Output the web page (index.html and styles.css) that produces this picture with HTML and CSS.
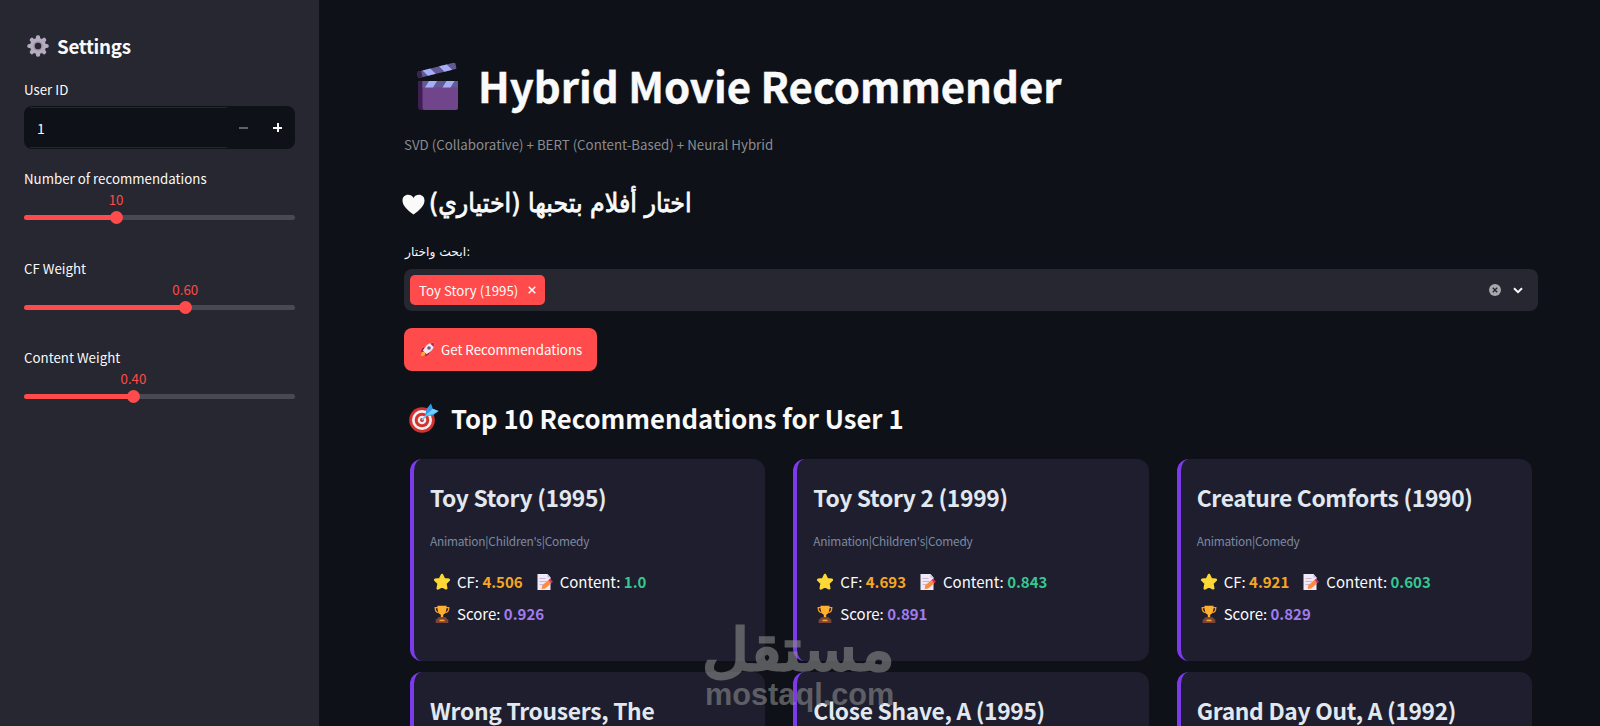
FILE: index.html
```
<!DOCTYPE html>
<html lang="en">
<head>
<meta charset="utf-8">
<title>Hybrid Movie Recommender</title>
<link rel="stylesheet" href="styles.css">
</head>
<body>

<!-- shared icons -->
<svg class="defs" width="0" height="0">
  <symbol id="i-star" viewBox="0 0 18 18">
    <path fill="#fdd835" stroke="#fdd835" stroke-width="2.600" stroke-linejoin="round" d="M9 2l2 4.300 4.800.6-3.500 3.500.9 4.900L9 13l-4.200 2.300.9-4.900-3.500-3.500L7 6.300z"/>
  </symbol>
  <symbol id="i-memo" viewBox="0 0 18 18">
    <path fill="#f1e9f5" d="M1.500 1h10l3 3.400V17h-13z"/>
    <path fill="#c9b5d6" d="M11.500 1v3.400h3zM3.500 5h6v1h-6zM3.500 8h7v1h-7zM3.500 11h4v1h-4z"/>
    <path fill="#ff8a3d" d="M6.400 12.300l6-5.200 2.800 3.100-6 5.200-3.600.6z"/>
    <path fill="#e0266b" d="M12.400 7.100l1.700-1.400 2.900 3-1.800 1.500z"/>
  </symbol>
  <symbol id="i-cup" viewBox="0 0 18 18">
    <path fill="none" stroke="#f59a23" stroke-width="1.300" d="M5 2.700H2.200c0 3 1.200 4.600 3.600 5M13 2.700h2.800c0 3-1.200 4.600-3.600 5"/>
    <path fill="#ffb02e" d="M4.400.8h9.200c0 5-1 8-3.400 9v2.600H7.800V9.800C5.400 8.800 4.400 5.800 4.400.8z"/>
    <path fill="#7d4533" d="M5 12.200h8l1 2h1.300V18H2.700v-3.800H4z"/>
    <path fill="#f9a73e" d="M6.500 14.700h5v1.500h-5z"/>
  </symbol>
</svg>

<div class="app">

  <div class="sidebar">
    <h2>
      <svg class="gear" viewBox="0 0 22 22">
        <g fill="#b4abbf">
          <g id="teeth"><rect x="8.900" y="0.300" width="4.200" height="21.400" rx="1.800"/><rect x="0.300" y="8.900" width="21.400" height="4.200" rx="1.800"/></g>
          <use href="#teeth" transform="rotate(45 11 11)"/>
          <circle cx="11" cy="11" r="8"/>
        </g>
        <circle cx="11" cy="11" r="4.600" fill="#998da6"/>
        <circle cx="11" cy="11" r="3.200" fill="#262730"/>
      </svg>
      Settings
    </h2>

    <label class="first">User ID</label>
    <div class="number">
      <span class="value">1</span>
      <span class="minus"></span>
      <span class="plus"></span>
    </div>

    <div class="slider">
      <label>Number of recommendations</label>
      <div class="track" style="--v:34%"><b>10</b><i></i></div>
    </div>
    <div class="slider">
      <label>CF Weight</label>
      <div class="track" style="--v:59.5%"><b>0.60</b><i></i></div>
    </div>
    <div class="slider">
      <label>Content Weight</label>
      <div class="track" style="--v:40.4%"><b>0.40</b><i></i></div>
    </div>
  </div>

  <div class="main">
    <h1>
      <svg class="clapper" viewBox="0 0 42 48">
        <g transform="rotate(-14 2 14)">
          <rect x="1" y="8.500" width="39.500" height="6.500" rx="1" fill="#635994"/>
          <path fill="#a6aef5" d="M7 8.500h8l4 6.500h-8zM24 8.500h8l4 6.500h-8z"/>
          <rect x="1" y="8.500" width="4.500" height="6.500" rx="1" fill="#3b2150"/>
        </g>
        <path fill="#3f1f52" d="M1 18h6v29H4a3 3 0 0 1-3-3z"/>
        <path fill="#70458c" d="M5.500 18H41v27a2 2 0 0 1-2 2H7.500a2 2 0 0 1-2-2z"/>
        <path fill="#635994" d="M5.500 18H41v6.500H5.500z"/>
        <path fill="#a6aef5" d="M12 18h8l-4 6.500H8zM29.500 18h8l-4 6.500h-8z"/>
      </svg>
      <span>Hybrid Movie Recommender</span>
    </h1>
    <p class="caption">SVD (Collaborative) + BERT (Content-Based) + Neural Hybrid</p>

    <h3 class="ar">
      <svg class="heart" viewBox="0 0 23 21"><path fill="#fafafa" d="M11.500 20.500C6 16.500.5 12 .5 6.500.5 3 3 .8 6 .8c2.400 0 4.500 1.200 5.500 3.200 1-2 3.100-3.200 5.500-3.200 3 0 5.500 2.200 5.500 5.700 0 5.500-5.500 10-11 14z"/></svg>
      <span>اختار أفلام بتحبها (اختياري)</span>
    </h3>
    <label class="ar-label">ابحث واختار:</label>

    <div class="select">
      <span class="tag">Toy Story (1995)
        <svg width="8" height="8" viewBox="0 0 8 8"><path stroke="#fff" stroke-width="1.400" d="M.7.7l6.600 6.600M7.300.7L.7 7.300"/></svg>
      </span>
      <svg class="clear" width="12" height="12" viewBox="0 0 12 12"><circle cx="6" cy="6" r="6" fill="#a7a8ac"/><path stroke="#262730" stroke-width="1.400" d="M3.800 3.800l4.400 4.400M8.200 3.800L3.800 8.200"/></svg>
      <svg width="10" height="7" viewBox="0 0 10 7"><path fill="none" stroke="#fafafa" stroke-width="2" d="M1 1.200l4 4 4-4"/></svg>
    </div>

    <button>
      <svg class="rocket" viewBox="0 0 16 16">
        <path fill="#ffb02e" d="M1 15c0-3 1.200-4.500 3-4.500L5.800 12C5.500 14 4 15 1 15z"/>
        <path fill="#a5183c" d="M7 5.500L3 6.500.8 10l4 .5zM10.500 9l-1 4L6 15.200l-.5-4z"/>
        <path fill="#ece7f0" d="M15.200.8c.3 4-1.200 7.200-4.400 9.600L7 13 3 9l2.600-3.800C8 2 11.200.5 15.200.8z"/>
        <path fill="#d3224f" d="M15.200.8c.1 1.700-.1 3.100-.7 4.400L10.800 1.500C12.100.9 13.500.7 15.200.8z"/>
        <circle cx="9.600" cy="6.400" r="1.900" fill="#6a5a8c"/>
      </svg>
      Get Recommendations
    </button>

    <h3 class="top">
      <svg class="target" viewBox="0 0 30 30">
        <circle cx="13" cy="17" r="12.800" fill="#d3332f"/>
        <circle cx="13" cy="17" r="10" fill="#f7eef2"/>
        <circle cx="13" cy="17" r="7.300" fill="#d3332f"/>
        <circle cx="13" cy="17" r="4.300" fill="#f7eef2"/>
        <circle cx="13" cy="17" r="2" fill="#d3332f"/>
        <path stroke="#7cc8f7" stroke-width="1.800" d="M13 17l8-9"/>
        <path fill="#2f9df0" d="M16 13l1.500-7L22 .5l1.800 5.200L29.500 8l-5.500 4.600z"/>
        <path fill="#74d0fa" d="M16 13l7.800-7.300L29.500 8l-5.500 3z"/>
      </svg>
      <span>Top 10 Recommendations for User 1</span>
    </h3>

    <div class="cards">
      <div class="card">
        <h4>Toy Story (1995)</h4>
        <p class="genre">Animation|Children's|Comedy</p>
        <div class="row"><svg><use href="#i-star"/></svg>CF: <b class="cf">4.506</b><svg class="gap"><use href="#i-memo"/></svg>Content: <b class="ct">1.0</b></div>
        <div class="row"><svg><use href="#i-cup"/></svg>Score: <b class="sc">0.926</b></div>
      </div>
      <div class="card">
        <h4>Toy Story 2 (1999)</h4>
        <p class="genre">Animation|Children's|Comedy</p>
        <div class="row"><svg><use href="#i-star"/></svg>CF: <b class="cf">4.693</b><svg class="gap"><use href="#i-memo"/></svg>Content: <b class="ct">0.843</b></div>
        <div class="row"><svg><use href="#i-cup"/></svg>Score: <b class="sc">0.891</b></div>
      </div>
      <div class="card">
        <h4>Creature Comforts (1990)</h4>
        <p class="genre">Animation|Comedy</p>
        <div class="row"><svg><use href="#i-star"/></svg>CF: <b class="cf">4.921</b><svg class="gap"><use href="#i-memo"/></svg>Content: <b class="ct">0.603</b></div>
        <div class="row"><svg><use href="#i-cup"/></svg>Score: <b class="sc">0.829</b></div>
      </div>
      <div class="card"><h4>Wrong Trousers, The</h4></div>
      <div class="card"><h4>Close Shave, A (1995)</h4></div>
      <div class="card"><h4>Grand Day Out, A (1992)</h4></div>
    </div>
  </div>

</div>

<div class="watermark">
  <div class="wm-ar"><span>مستقل</span></div>
  <div class="wm-en">mostaql.com</div>
</div>

</body>
</html>
```
FILE: styles.css
```
* { box-sizing: border-box; }

body {
  margin: 0;
  height: 726px;
  overflow: hidden;
  background: #0e1117;
  color: #fafafa;
  font-family: "Noto Sans CJK SC", "Noto Sans", sans-serif;
  font-size: 13.3px;
}
h1, h2, h3, h4, p { margin: 0; }
svg { flex: none; }
.defs { position: absolute; }

.app {
  display: flex;
  height: 726px;
  overflow: hidden;
}

/* sidebar */
.sidebar {
  width: 319px;
  flex: none;
  padding: 30px 24px 0;
  background: #262730;
}
.sidebar h2 {
  display: flex;
  align-items: center;
  height: 32px;
  font-size: 18.8px;
  letter-spacing: -.3px;
  line-height: 32px;
}
.gear {
  width: 22px;
  height: 22px;
  margin: 0 8px 0 3px;
}
label {
  display: block;
  line-height: 20px;
}
label.first { margin: 18px 0 6px; }

.number {
  display: flex;
  align-items: center;
  height: 43px;
  padding: 0 13px;
  border-radius: 8px;
  background: linear-gradient(#262730, #262730) 6px 1px / 197px 1px no-repeat,
              linear-gradient(#262730, #262730) 6px 41px / 197px 1px no-repeat,
              #0e1117;
}
.number .value {
  flex: 1;
  font-size: 14px;
}
.minus, .plus {
  width: 9px;
  height: 2px;
  background: #5f6069;
}
.plus {
  margin-left: 25px;
  background: linear-gradient(#fafafa, #fafafa) center / 2px 9px no-repeat,
              linear-gradient(#fafafa, #fafafa) center / 9px 2px no-repeat;
  height: 9px;
}

.slider {
  height: 89.5px;
  padding-top: 20px;
}
.track {
  position: relative;
  height: 5px;
  margin-top: 26px;
  border-radius: 3px;
  background: linear-gradient(to right, #ff4b4b var(--v), #484953 var(--v));
}
.track i {
  position: absolute;
  left: var(--v);
  top: -4px;
  width: 13px;
  height: 13px;
  margin-left: -6.5px;
  border-radius: 50%;
  background: #ff4b4b;
}
.track b {
  position: absolute;
  left: var(--v);
  bottom: 10px;
  transform: translateX(-50%);
  color: #ff4b4b;
  font-weight: 400;
  line-height: 20px;
}

/* main column */
.main {
  flex: 1;
  padding: 59px 62px 0 85px;
}
h1 {
  display: flex;
  height: 52px;
  font-size: 41.9px;
  line-height: 52px;
  -webkit-text-stroke: .4px #fafafa;
}
.clapper {
  width: 42px;
  height: 48px;
  margin: 4px 19px 0 13px;
}
.caption {
  margin-top: 24px;
  color: #8b8c90;
  line-height: 20px;
}
h3 {
  display: flex;
  height: 36px;
  font-size: 25.7px;
  line-height: 36px;
}
.ar {
  margin-top: 30px;
  font-family: "DejaVu Sans", sans-serif;
  font-weight: 400;
  -webkit-text-stroke: .8px #fafafa;
}
.ar span {
  transform: scaleX(.925);
  transform-origin: left;
}
.heart {
  width: 23px;
  height: 21px;
  margin: 9px 4px 0 -2px;
}
.ar-label {
  margin: 21px 0 7px 1px;
  font-family: "DejaVu Sans", sans-serif;
  font-size: 12.3px;
}

.select {
  display: flex;
  align-items: center;
  height: 42px;
  padding: 0 15px 0 6px;
  border-radius: 8px;
  background: #262730;
}
.tag {
  display: flex;
  align-items: center;
  justify-content: space-between;
  width: 135px;
  height: 30px;
  padding: 0 9px;
  border-radius: 5px;
  background: #ff4b4b;
}
.clear { margin: 0 12px 0 auto; }

button {
  display: flex;
  align-items: center;
  width: 193px;
  height: 43px;
  margin-top: 17px;
  padding: 0 0 0 16px;
  border: 0;
  border-radius: 8px;
  background: #ff4b4b;
  color: #fff;
  font: inherit;
  white-space: nowrap;
}
.rocket {
  width: 15px;
  height: 15px;
  margin-right: 6px;
}
.top { margin-top: 29px; }
.target {
  width: 30px;
  height: 30px;
  margin: 3px 12px 0 5px;
}

.cards {
  display: grid;
  grid-template-columns: repeat(3, 1fr);
  gap: 0 16px;
  margin-top: 17px;
}
.card {
  height: 202px;
  margin: 6px 6px 5px;
  padding: 22px 16px 0;
  border-left: 4px solid #7c3aed;
  border-radius: 12px;
  background: #1e1e2e;
  white-space: nowrap;
}
h4 {
  color: #e2e8f0;
  font-size: 22.8px;
  letter-spacing: -.3px;
  line-height: 34px;
}
.genre {
  margin: 16px 0 15px;
  color: #7c8aa0;
  font-size: 11.9px;
  letter-spacing: -.24px;
  line-height: 20px;
}
.row {
  display: flex;
  align-items: center;
  height: 32px;
  font-size: 15px;
  line-height: 32px;
  white-space: pre;
}
.row svg {
  width: 18px;
  height: 18px;
  margin: 0 6px 0 3px;
}
.row svg.gap { margin-left: 13px; }
.cf { color: #f5a623; }
.ct { color: #34c98e; }
.sc { color: #a07cf0; }

/* stamp over the page */
.watermark {
  position: absolute;
  left: 705px;
  top: 620px;
  width: 190px;
  height: 100px;
  color: #8a8a8a;
  opacity: .6;
}
.wm-ar {
  height: 60px;
  margin-left: -3px;
  font: 400 58px/60px "DejaVu Sans", sans-serif;
  -webkit-text-stroke: 3px #8a8a8a;
}
.wm-ar span {
  display: inline-block;
  transform: scaleX(1.11);
  transform-origin: left;
}
.wm-en {
  font: 700 30.7px/30px "Liberation Sans", sans-serif;
}
```
